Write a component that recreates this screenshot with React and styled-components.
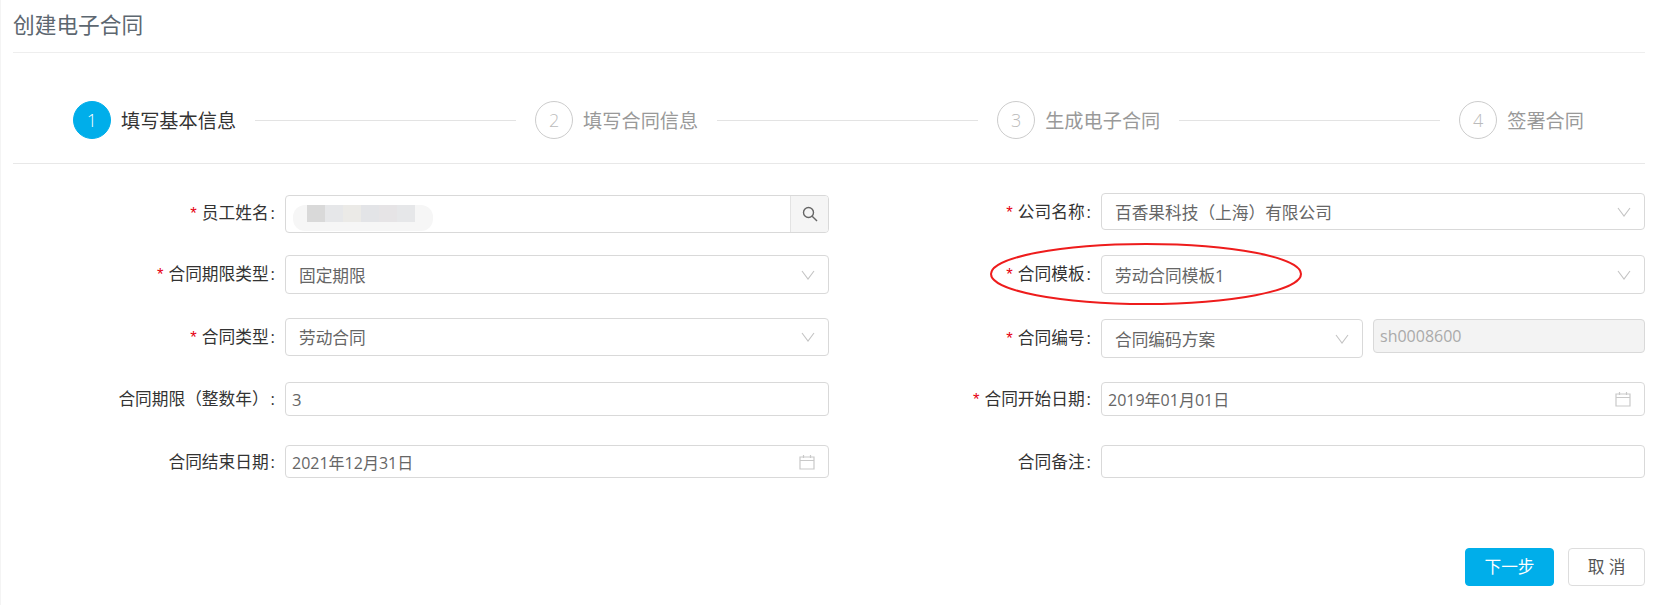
import React from 'react';
import styled, { createGlobalStyle } from 'styled-components';

const GlobalStyle = createGlobalStyle`
    html, body {
        margin: 0;
        background: #fff;
    }
    body {
        font-family: "Open Sans", "Noto Sans CJK SC", sans-serif;
    }
`

const Page = styled.div`
    width: 1669px;
    height: 605px;
    box-sizing: border-box;
    padding: 0 24px 0 13px;
    overflow: hidden;
    border-left: 1px solid #f4f4f4;
`

const Title = styled.div`
    height: 53px;
    box-sizing: border-box;
    margin-left: -1px;
    border-bottom: 1px solid #eee;
    font-size: 21.7px;
    line-height: 50px;
    color: #5d6770;
`

const Steps = styled.div`
    height: 111px;
    box-sizing: border-box;
    border-bottom: 1px solid #e8e8e8;
    margin-left: -1px;
    padding: 48px 61px 0 60px;
    display: flex;
    align-items: flex-start;
`

const Circle = styled.div`
    width: 38px;
    height: 38px;
    box-sizing: border-box;
    flex: none;
    border-radius: 50%;
    border: 1px solid ${p => (p.$active ? '#00aeea' : '#ccc')};
    background: ${p => (p.$active ? '#00aeea' : '#fff')};
    color: ${p => (p.$active ? '#fff' : '#bbb')};
    font-size: 18px;
    font-weight: 300;
    line-height: 36px;
    text-align: center;
`

const StepText = styled.div`
    flex: none;
    margin-left: 10px;
    font-size: 19.2px;
    line-height: 40px;
    color: ${p => (p.$active ? '#333' : '#999')};
`

const StepLine = styled.div`
    flex: 1;
    height: 1px;
    margin: 19px 19px 0 19px;
    background: #e3e3e3;
`

const Form = styled.div`
    display: grid;
    grid-template-columns: 816px 816px;
    margin-left: -1px;
`

const Column = styled.div`
    display: flex;
    flex-direction: column;
`

const Row = styled.div`
    position: relative;
    display: flex;
    align-items: flex-start;
    gap: 10px;
    margin-top: ${p => p.$gap}px;
`

const Label = styled.div`
    width: 262px;
    height: ${p => p.$height}px;
    flex: none;
    text-align: right;
    font-size: 16.7px;
    line-height: ${p => p.$height}px;
    color: #333;
    white-space: nowrap;
`

const Star = styled.i`
    font-family: "Liberation Sans", sans-serif;
    font-style: normal;
    color: #e60012;
    margin-right: 5px;
`

const Colon = styled.span`
    margin-left: 2px;
`

const Control = styled.div`
    flex: ${p => (p.$width ? 'none' : 1)};
    width: ${p => (p.$width ? `${p.$width}px` : 'auto')};
    height: ${p => p.$height}px;
    box-sizing: border-box;
    display: flex;
    align-items: center;
    justify-content: space-between;
    padding: 0 ${p => (p.$icon ? 13 : 0)}px 0 ${p => p.$inset}px;
    border: 1px solid #d9d9d9;
    border-radius: 4px;
    background: ${p => (p.$disabled ? '#f3f3f3' : '#fff')};
    color: ${p => (p.$disabled ? '#aaa' : '#666')};
    font-size: ${p => (p.$small ? 16 : 16.7)}px;
    overflow: hidden;
`

const Addon = styled.div`
    width: 37px;
    height: 100%;
    flex: none;
    display: flex;
    align-items: center;
    justify-content: center;
    border-left: 1px solid #e3e3e3;
    background: #f5f5f5;
`

const Smudge = styled.div`
    display: flex;
    align-items: flex-start;
    width: 140px;
    height: 26px;
    margin-top: 7px;
    padding-left: 14px;
    box-sizing: border-box;
    border-radius: 12px;
    background: #f6f6f6;
`

const SmudgeBlock = styled.span`
    width: 18px;
    height: 17px;
    background: ${p => p.$color};
`

const Ring = styled.svg`
    position: absolute;
    left: 160px;
    top: -12px;
    pointer-events: none;
`

const Footer = styled.div`
    display: flex;
    justify-content: flex-end;
    gap: 14px;
    margin-top: 70px;
`

const Button = styled.div`
    height: 38px;
    box-sizing: border-box;
    width: ${p => (p.$primary ? 89 : 77)}px;
    border: 1px solid ${p => (p.$primary ? '#00aeea' : '#ddd')};
    border-radius: 4px;
    background: ${p => (p.$primary ? '#00aeea' : '#fff')};
    color: ${p => (p.$primary ? '#fff' : '#555')};
    font-size: 16.7px;
    line-height: 36px;
    text-align: center;
`

const Chevron = () => (
    <svg width="14" height="10" viewBox="0 0 14 10" fill="none" stroke="#c4c4c4" strokeWidth="1.1">
        <path d="M1 1l6 8 6-8" />
    </svg>
)

const Calendar = () => (
    <svg width="16" height="16" viewBox="0 0 16 16" fill="none" stroke="#c9c9c9" strokeWidth="1.2">
        <path d="M1 3h14v12H1zM1 6.5h14M4.5 1v3M11.5 1v3" />
    </svg>
)

const Search = () => (
    <svg width="16" height="16" viewBox="0 0 16 16" fill="none" stroke="#666" strokeWidth="1.4">
        <circle cx="6.5" cy="6.5" r="5" />
        <path d="M10.2 10.2L15 15" />
    </svg>
)

const steps = ['填写基本信息', '填写合同信息', '生成电子合同', '签署合同'];
const smudges = ['#d9d9d9', '#e6e7e9', '#ebeae7', '#e3e4e7', '#e6e4e6', '#e6e7e9'];

function Field({ label, required, gap, height, labelHeight, children }) {
    return (
        <Row $gap={gap}>
            <Label $height={labelHeight || height}>
                {required && <Star>*</Star>}{label}<Colon>:</Colon>
            </Label>
            {children}
        </Row>
    );
}

function App() {
    return (
        <>
            <GlobalStyle />
            <Page>
                <Title>创建电子合同</Title>
                <Steps>
                    {steps.map((text, i) => (
                        <React.Fragment key={text}>
                            <Circle $active={i === 0}>{i + 1}</Circle>
                            <StepText $active={i === 0}>{text}</StepText>
                            {i < steps.length - 1 && <StepLine />}
                        </React.Fragment>
                    ))}
                </Steps>
                <Form>
                    <Column>
                        <Field label="员工姓名" required gap={31} height={38} labelHeight={36}>
                            <Control $height={38} $inset={7}>
                                <Smudge>
                                    {smudges.map((c, i) => <SmudgeBlock key={i} $color={c} />)}
                                </Smudge>
                                <Addon><Search /></Addon>
                            </Control>
                        </Field>
                        <Field label="合同期限类型" required gap={22} height={39} labelHeight={38}>
                            <Control $height={39} $inset={13} $icon>固定期限<Chevron /></Control>
                        </Field>
                        <Field label="合同类型" required gap={24} height={38}>
                            <Control $height={38} $inset={13} $icon>劳动合同<Chevron /></Control>
                        </Field>
                        <Field label="合同期限（整数年）" gap={26} height={34}>
                            <Control $height={34} $inset={6}>3</Control>
                        </Field>
                        <Field label="合同结束日期" gap={29} height={33}>
                            <Control $height={33} $inset={6} $icon $small>2021年12月31日<Calendar /></Control>
                        </Field>
                    </Column>
                    <Column>
                        <Field label="公司名称" required gap={29} height={37}>
                            <Control $height={37} $inset={13} $icon>百香果科技（上海）有限公司<Chevron /></Control>
                        </Field>
                        <Field label="合同模板" required gap={25} height={39} labelHeight={37}>
                            <Control $height={39} $inset={13} $icon>劳动合同模板1<Chevron /></Control>
                            <Ring width="314" height="64" viewBox="0 0 314 64" fill="none">
                                <ellipse cx="157" cy="31" rx="155" ry="30" stroke="#ee1c1c" strokeWidth="2" />
                            </Ring>
                        </Field>
                        <Field label="合同编号" required gap={25} height={38}>
                            <Control $width={262} $height={39} $inset={13} $icon>合同编码方案<Chevron /></Control>
                            <Control $height={34} $inset={6} $disabled $small>sh0008600</Control>
                        </Field>
                        <Field label="合同开始日期" required gap={24} height={34}>
                            <Control $height={34} $inset={6} $icon $small>2019年01月01日<Calendar /></Control>
                        </Field>
                        <Field label="合同备注" gap={29} height={33}>
                            <Control $height={33} $inset={6} />
                        </Field>
                        <Footer>
                            <Button $primary>下一步</Button>
                            <Button>取 消</Button>
                        </Footer>
                    </Column>
                </Form>
            </Page>
        </>
    );
}

export default App;
